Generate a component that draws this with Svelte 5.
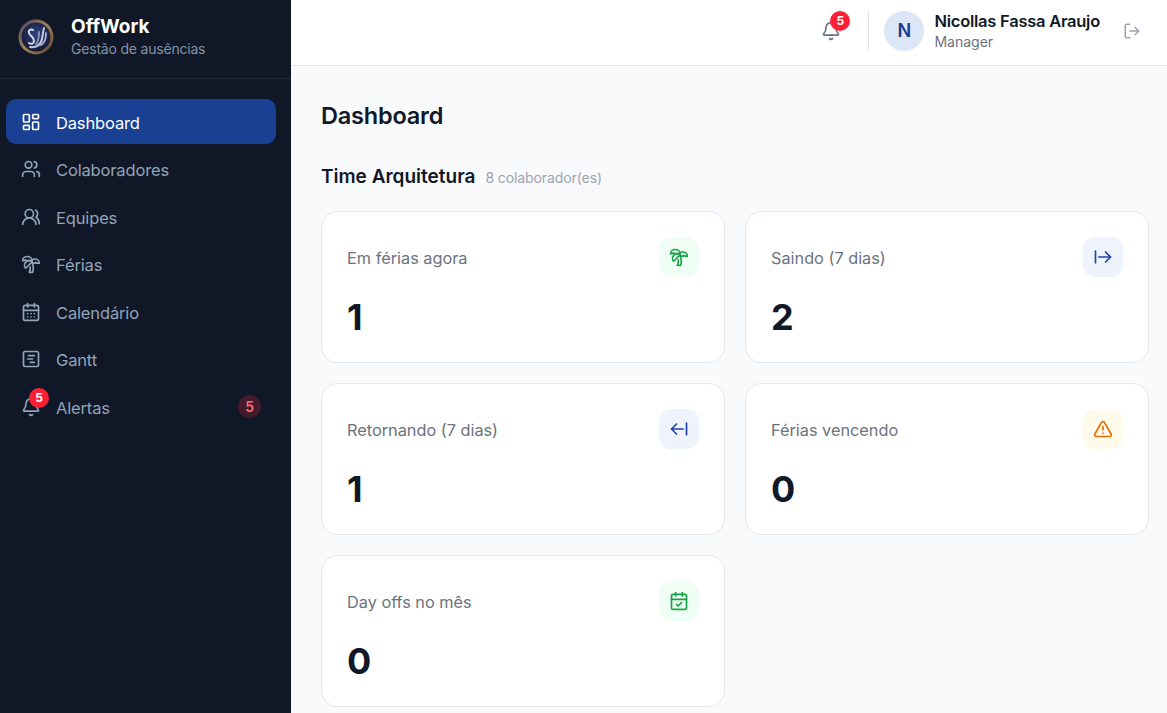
<script>
  const ICONS = {
    dashboard: '<rect x="3" y="3" width="7" height="9" rx="1"/><rect x="14" y="3" width="7" height="5" rx="1"/><rect x="14" y="12" width="7" height="9" rx="1"/><rect x="3" y="16" width="7" height="5" rx="1"/>',
    users: '<path d="M16 21v-2a4 4 0 0 0-4-4H6a4 4 0 0 0-4 4v2"/><circle cx="9" cy="7" r="4"/><path d="M22 21v-2a4 4 0 0 0-3-3.87"/><path d="M16 3.13a4 4 0 0 1 0 7.75"/>',
    usersRound: '<path d="M18 21a8 8 0 0 0-16 0"/><circle cx="10" cy="8" r="5"/><path d="M22 20c0-3.37-2-6.5-4-8a5 5 0 0 0-.45-8.3"/>',
    palm: '<path d="M13 8c0-2.76-2.46-5-5.5-5S2 5.24 2 8h2l1-1 1 1h4"/><path d="M13 7.14A5.82 5.82 0 0 1 16.5 6c3.04 0 5.5 2.24 5.5 5h-3l-1-1-1 1h-3"/><path d="M5.89 9.71c-2.15 2.15-2.3 5.47-.35 7.43l4.24-4.25.7-.7.71-.71 2.12-2.12c-1.95-1.96-5.27-1.8-7.42.35"/><path d="M11 15.5c.5 2.5-.17 4.5-1 6.5h4c2-5.5-.5-12-1-14"/>',
    calendar: '<path d="M8 2v4"/><path d="M16 2v4"/><rect x="3" y="4" width="18" height="18" rx="2"/><path d="M3 10h18"/><path d="M8 14h.01"/><path d="M12 14h.01"/><path d="M16 14h.01"/><path d="M8 18h.01"/><path d="M12 18h.01"/><path d="M16 18h.01"/>',
    gantt: '<rect x="3" y="3" width="18" height="18" rx="2"/><path d="M9 8h7"/><path d="M8 12h6"/><path d="M11 16h5"/>',
    bell: '<path d="M10.268 21a2 2 0 0 0 3.464 0"/><path d="M3.262 15.326A1 1 0 0 0 4 17h16a1 1 0 0 0 .74-1.673C19.41 13.956 18 12.499 18 8A6 6 0 0 0 6 8c0 4.499-1.411 5.956-2.738 7.326"/>',
    logout: '<path d="m16 17 5-5-5-5"/><path d="M21 12H9"/><path d="M9 21H5a2 2 0 0 1-2-2V5a2 2 0 0 1 2-2h4"/>',
    leaving: '<path d="M3 5v14"/><path d="M21 12H7"/><path d="m15 18 6-6-6-6"/>',
    returning: '<path d="m9 6-6 6 6 6"/><path d="M3 12h14"/><path d="M21 19V5"/>',
    alert: '<path d="m21.73 18-8-14a2 2 0 0 0-3.48 0l-8 14A2 2 0 0 0 4 21h16a2 2 0 0 0 1.73-3"/><path d="M12 9v4"/><path d="M12 17h.01"/>',
    calendarCheck: '<path d="M8 2v4"/><path d="M16 2v4"/><rect x="3" y="4" width="18" height="18" rx="2"/><path d="M3 10h18"/><path d="m9 16 2 2 4-4"/>'
  };

  const NAV = [
    { label: 'Dashboard', icon: 'dashboard', active: true },
    { label: 'Colaboradores', icon: 'users' },
    { label: 'Equipes', icon: 'usersRound' },
    { label: 'Férias', icon: 'palm' },
    { label: 'Calendário', icon: 'calendar' },
    { label: 'Gantt', icon: 'gantt' },
    { label: 'Alertas', icon: 'bell', count: 5 }
  ];

  const CARDS = [
    { label: 'Em férias agora', value: 1, icon: 'palm', tone: 'green' },
    { label: 'Saindo (7 dias)', value: 2, icon: 'leaving', tone: 'blue' },
    { label: 'Retornando (7 dias)', value: 1, icon: 'returning', tone: 'blue' },
    { label: 'Férias vencendo', value: 0, icon: 'alert', tone: 'amber' },
    { label: 'Day offs no mês', value: 0, icon: 'calendarCheck', tone: 'green' }
  ];
</script>

{#snippet icon(name, size = 20)}
  <svg class="icon" width={size} height={size} viewBox="0 0 24 24" fill="none" stroke="currentColor" stroke-width="2" stroke-linecap="round" stroke-linejoin="round">
    {@html ICONS[name]}
  </svg>
{/snippet}

<div class="app">
  <aside class="sidebar">
    <div class="brand">
      <svg class="logo" width="36" height="36" viewBox="0 0 36 36">
        <defs>
          <radialGradient id="orb" cx="0.5" cy="0.42" r="0.55">
            <stop offset="0" stop-color="#2f4388" />
            <stop offset="0.75" stop-color="#1b2244" />
            <stop offset="1" stop-color="#14172a" />
          </radialGradient>
          <linearGradient id="ring" x1="0" y1="0" x2="1" y2="1">
            <stop offset="0" stop-color="#4c4c5a" />
            <stop offset="0.5" stop-color="#a5825a" />
            <stop offset="1" stop-color="#5e4630" />
          </linearGradient>
          <filter id="soft" x="-10%" y="-10%" width="120%" height="120%">
            <feGaussianBlur stdDeviation="0.45" />
          </filter>
        </defs>
        <circle cx="18" cy="18" r="16" fill="url(#orb)" stroke="url(#ring)" stroke-width="3" />
        <g filter="url(#soft)" fill="none" stroke-linecap="round">
          <path d="M15 11c-3-1.500-5 1-4 3 1 3 5 4 5 8 0 3-3 3.500-5 2" stroke="#d4d9e6" stroke-width="2" />
          <path d="M12 28c6 1 11-2 12-8 1-4 1-8 2-11" stroke="#c3c9da" stroke-width="2" />
          <path d="M18 25c3-3 3-7 3-12" stroke="#8f98b2" stroke-width="1.800" />
          <path d="M23 26c4-2 5-7 5-12" stroke="#a7afc4" stroke-width="1.800" />
        </g>
      </svg>
      <div class="brand-text">
        <div class="brand-name">OffWork</div>
        <div class="brand-sub">Gestão de ausências</div>
      </div>
    </div>

    <nav class="nav">
      {#each NAV as item (item.label)}
        <div class="nav-item" class:active={item.active}>
          <span class="nav-icon">
            {@render icon(item.icon)}
            {#if item.count}<span class="dot nav-dot">{item.count}</span>{/if}
          </span>
          <span class="nav-label">{item.label}</span>
          {#if item.count}<span class="nav-count">{item.count}</span>{/if}
        </div>
      {/each}
    </nav>
  </aside>

  <div class="content">
    <header class="topbar">
      <div class="bell">
        {@render icon('bell')}
        <span class="dot bell-dot">5</span>
      </div>
      <div class="divider"></div>
      <div class="avatar">N</div>
      <div class="user">
        <div class="user-name">Nicollas Fassa Araujo</div>
        <div class="user-role">Manager</div>
      </div>
      <div class="logout">{@render icon('logout', 18)}</div>
    </header>

    <main class="main">
      <h1 class="title">Dashboard</h1>
      <div class="team">
        <h2 class="team-name">Time Arquitetura</h2>
        <span class="team-count">8 colaborador(es)</span>
      </div>
      <div class="grid">
        {#each CARDS as card (card.label)}
          <div class="card">
            <div class="card-top">
              <span class="card-label">{card.label}</span>
              <span class="card-icon {card.tone}">{@render icon(card.icon)}</span>
            </div>
            <div class="card-value">{card.value}</div>
          </div>
        {/each}
      </div>
    </main>
  </div>
</div>

<style>
  :global(body) {
    margin: 0;
    font-family: Inter, 'Noto Sans', sans-serif;
    overflow: hidden;
  }

  .app {
    display: flex;
    height: 713px;
    overflow: hidden;
  }

  .icon {
    display: block;
  }

  .sidebar {
    flex: 0 0 291px;
    background: #101828;
    color: #94a3b8;
  }

  .brand {
    display: flex;
    align-items: center;
    gap: 17px;
    height: 79px;
    padding: 0 0 4px 18px;
    box-sizing: border-box;
    border-bottom: 1px solid #1f2937;
  }

  .logo {
    flex: none;
  }

  .brand-name {
    font-size: 19px;
    font-weight: 700;
    line-height: 24px;
    color: #fff;
  }

  .brand-sub {
    font-size: 14px;
    letter-spacing: -0.2px;
    line-height: 20px;
    color: #8492a6;
  }

  .nav {
    display: flex;
    flex-direction: column;
    gap: 2.5px;
    padding: 20px 15px 0 6px;
  }

  .nav-item {
    display: flex;
    align-items: center;
    height: 45px;
    padding: 0 15px;
    border-radius: 10px;
    font-size: 16.5px;
    letter-spacing: -0.15px;
    color: #94a3b8;
  }

  .nav-item.active {
    background: #1a4093;
    color: #fff;
  }

  .nav-icon {
    position: relative;
    flex: none;
    width: 20px;
    margin-right: 15px;
  }

  .nav-label {
    flex: 1;
    padding-top: 2px;
  }

  .nav-count {
    width: 23px;
    height: 23px;
    border-radius: 50%;
    background: #451a2b;
    color: #f87171;
    font-size: 14px;
    font-weight: 600;
    line-height: 23px;
    text-align: center;
  }

  .dot {
    position: absolute;
    width: 20px;
    height: 20px;
    border-radius: 50%;
    background: #ff1f35;
    color: #fff;
    font-size: 12px;
    font-weight: 700;
    letter-spacing: 0;
    line-height: 20px;
    text-align: center;
  }

  .nav-dot {
    top: -9px;
    left: 8px;
  }

  .content {
    flex: 1;
    min-width: 0;
    display: flex;
    flex-direction: column;
    background: #f9fafc;
  }

  .topbar {
    flex: none;
    display: flex;
    align-items: center;
    justify-content: flex-end;
    height: 66px;
    box-sizing: border-box;
    padding: 0 26px 3px 0;
    background: #fff;
    border-bottom: 1px solid #e5e7eb;
    color: #6b7280;
  }

  .bell {
    position: relative;
    margin-right: 27px;
  }

  .bell-dot {
    top: -10px;
    left: 9px;
  }

  .divider {
    width: 1px;
    height: 40px;
    background: #e5e7eb;
    margin-right: 15px;
  }

  .avatar {
    width: 40px;
    height: 40px;
    border-radius: 50%;
    background: #dbe6f6;
    color: #1e3a8a;
    font-size: 18px;
    font-weight: 600;
    line-height: 40px;
    text-align: center;
    margin-right: 10px;
  }

  .user {
    margin-right: 23px;
  }

  .user-name {
    font-size: 16.5px;
    font-weight: 600;
    letter-spacing: -0.25px;
    line-height: 22px;
    color: #111827;
  }

  .user-role {
    font-size: 14px;
    line-height: 20px;
    color: #6b7280;
  }

  .logout {
    color: #9ca3af;
  }

  .main {
    padding: 34px 18px 0 30px;
  }

  .title {
    margin: 0;
    font-size: 23.5px;
    font-weight: 600;
    letter-spacing: -0.2px;
    line-height: 32px;
    color: #111827;
  }

  .team {
    display: flex;
    align-items: baseline;
    gap: 10px;
    margin-top: 33px;
  }

  .team-name {
    margin: 0;
    font-size: 19px;
    font-weight: 600;
    line-height: 24px;
    color: #111827;
  }

  .team-count {
    font-size: 14px;
    letter-spacing: -0.1px;
    color: #9ca3af;
  }

  .grid {
    display: grid;
    grid-template-columns: 1fr 1fr;
    gap: 20px;
    margin-top: 22px;
  }

  .card {
    height: 152px;
    box-sizing: border-box;
    padding: 25px;
    background: #fff;
    border: 1px solid #e5e7eb;
    border-radius: 16px;
  }

  .card-top {
    display: flex;
    align-items: center;
    justify-content: space-between;
  }

  .card-label {
    padding-top: 2px;
    font-size: 16.3px;
    color: #6b7280;
  }

  .card-icon {
    display: flex;
    align-items: center;
    justify-content: center;
    width: 40px;
    height: 40px;
    border-radius: 12px;
  }

  .green {
    background: #f0fdf4;
    color: #16a34a;
  }

  .blue {
    background: #eef3fc;
    color: #1e40af;
  }

  .amber {
    background: #fffbeb;
    color: #ea6c00;
  }

  .card-value {
    margin-top: 16px;
    font-size: 36px;
    font-weight: 700;
    line-height: 48px;
    color: #111827;
  }
</style>
